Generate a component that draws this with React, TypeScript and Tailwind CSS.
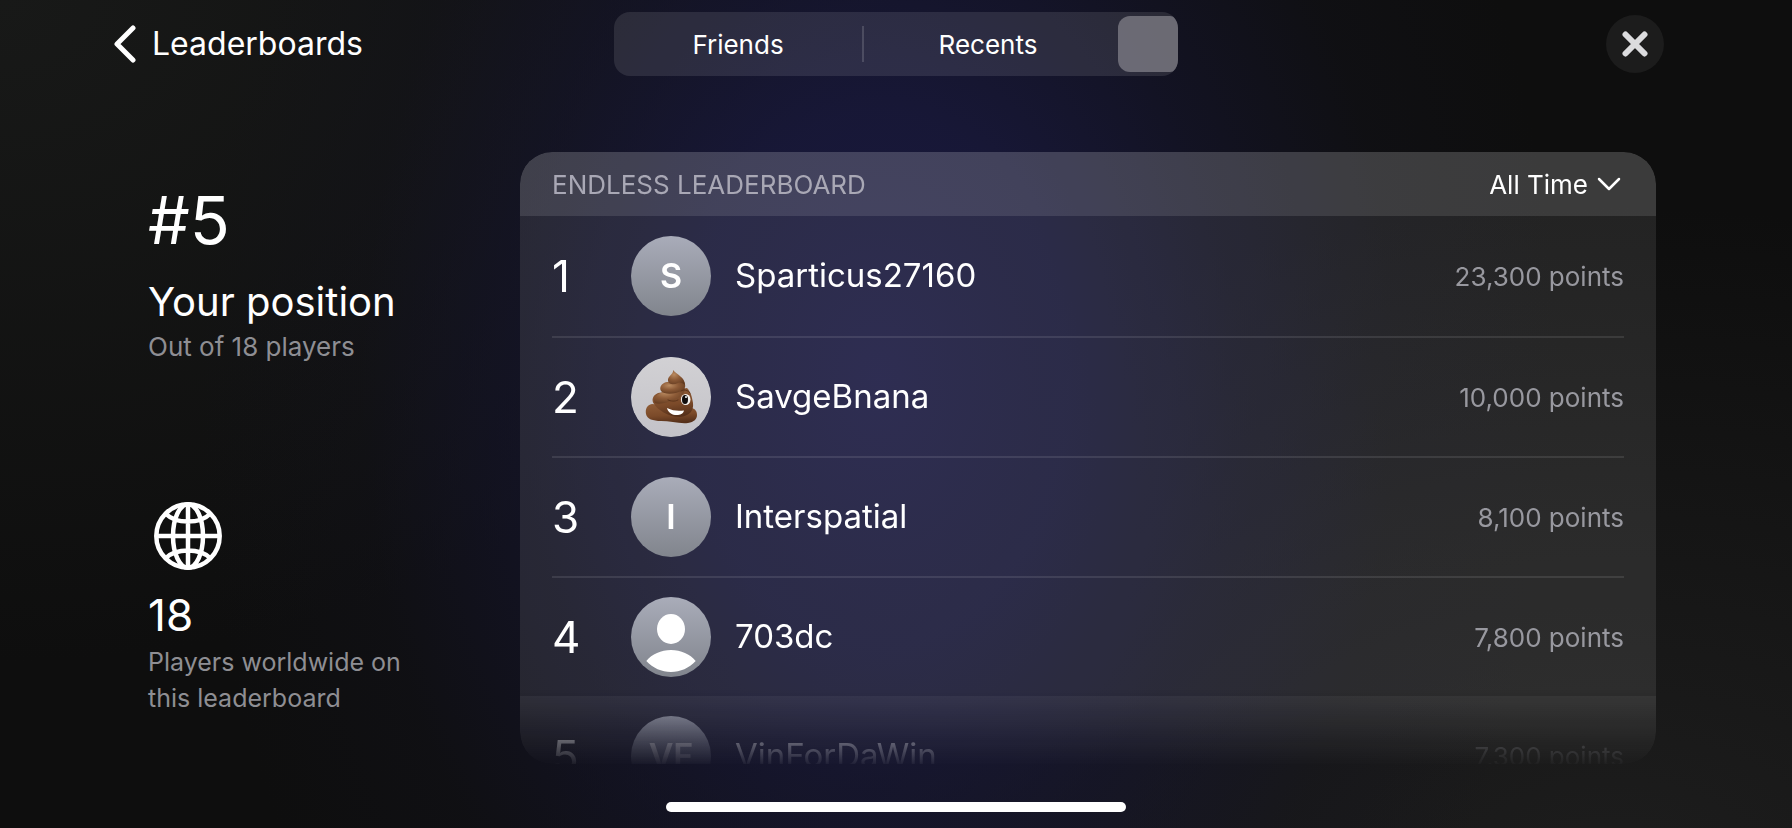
import React from "react";

const glow = {
  background: [
    "radial-gradient(ellipse 680px 960px at 49% 46%, rgba(27,26,68,0.95) 0%, rgba(25,25,62,0.84) 28%, rgba(22,22,50,0.58) 52%, rgba(20,20,34,0.25) 76%, rgba(18,18,30,0) 100%)",
    "radial-gradient(ellipse 60% 80% at 90% 105%, #1d1d1d 0%, rgba(29,29,29,0) 100%)",
    "radial-gradient(ellipse 50% 80% at 0% 0%, #181918 0%, rgba(24,25,24,0) 100%)",
    "#0e0e0e",
  ].join(","),
};

type Player = { rank: number; name: string; points: string; avatar: React.ReactNode; mine?: boolean };

function Initials({ children }: { children: string }) {
  return <span className="text-[34px] leading-none font-semibold text-white">{children}</span>;
}

function PersonAvatar() {
  return (
    <svg viewBox="0 0 80 80" className="size-20" aria-hidden="true">
      <ellipse cx="40" cy="32" rx="14" ry="15" fill="#fff" />
      <path d="M15.300 64C21 57 30 53 40 53s19 4 24.700 11C58 71 49.500 75 40 75s-18-4-24.700-11z" fill="#fff" />
    </svg>
  );
}

function PoopAvatar() {
  return (
    <svg viewBox="0 0 80 80" className="size-20" aria-hidden="true">
      <defs>
        <linearGradient id="plate" x1="0" y1="0" x2="0" y2="1">
          <stop offset="0" stopColor="#d2d1d4" />
          <stop offset="1" stopColor="#c3c2c8" />
        </linearGradient>
        <linearGradient id="base" x1="0.2" y1="0" x2="0.4" y2="1">
          <stop offset="0" stopColor="#8f5c37" />
          <stop offset="0.6" stopColor="#7b4a29" />
          <stop offset="1" stopColor="#56301a" />
        </linearGradient>
        <radialGradient id="swirl" cx="0.36" cy="0.3" r="0.8">
          <stop offset="0" stopColor="#b98a60" />
          <stop offset="0.45" stopColor="#8d5b37" />
          <stop offset="1" stopColor="#5f381e" />
        </radialGradient>
      </defs>
      <circle cx="40" cy="40" r="40" fill="url(#plate)" />
      <path d="M21 47c-5 1-7 5-6 10 1 5 7 7 15 7 9 0 19 3 27 2 6-1 9-4 9-8 0-4-2-6-5-7z" fill="url(#base)" />
      <path d="M27 36c-5 2-7 7-4 11 3 5 14 13 26 13 9-1 14-6 13-14-1-6-2-11-6-15z" fill="url(#base)" />
      <path d="M23 43c1-4 5-8 12-8 8 1 15-1 19-4 0 5-4 9-9 11-7 3-16 6-21 4-1-1-1-2-1-3z" fill="url(#swirl)" />
      <path d="M36 25c-6 1-8 6-6 9 3 4 15 3 20 0 5-2 5-6 3-9z" fill="url(#swirl)" />
      <path d="M42 13c1 4-6 6-5 11 1 4 6 4 10 2 2-1 5 0 7 2 0-8-8-10-12-15z" fill="url(#swirl)" />
      <path d="M37 43c3 1 6 2 10 0M50 34c3-2 7-1 9 2" fill="none" stroke="#5a341c" strokeWidth="1" strokeLinecap="round" />
      <ellipse cx="54.700" cy="42.500" rx="4.800" ry="5.500" fill="#f6f3ef" />
      <ellipse cx="54" cy="42.500" rx="3" ry="4.500" fill="#120e0d" />
      <circle cx="55" cy="40" r="1" fill="#fff" />
      <path d="M36 51c6 3 11 3 17 2.500-1 4-5 5-9 4.500s-7-3-8-7z" fill="#fff" />
    </svg>
  );
}

const players: Player[] = [
  { rank: 1, name: "Sparticus27160", points: "23,300 points", avatar: <Initials>S</Initials> },
  { rank: 2, name: "SavgeBnana", points: "10,000 points", avatar: <PoopAvatar /> },
  { rank: 3, name: "Interspatial", points: "8,100 points", avatar: <Initials>I</Initials> },
  { rank: 4, name: "703dc", points: "7,800 points", avatar: <PersonAvatar /> },
  { rank: 5, name: "VinForDaWin", points: "7,300 points", avatar: <Initials>VF</Initials>, mine: true },
];

function Row({ player }: { player: Player }) {
  return (
    <li className={player.mine ? "bg-white/6 px-8" : "px-8"}>
      <div
        className={
          player.rank === 1 || player.mine
            ? "flex h-[120px] items-center"
            : "flex h-[120px] items-center border-t-2 border-white/10"
        }
      >
        <span className="w-[79px] text-[44px]">{player.rank}</span>
        <span className="flex size-20 shrink-0 items-center justify-center overflow-hidden rounded-full bg-linear-to-b from-[#a9acb9] to-[#81858d]">
          {player.avatar}
        </span>
        <span className="min-w-0 flex-1 truncate pl-6 text-[33px]">{player.name}</span>
        <span className="text-[26px] text-[#98989f]">{player.points}</span>
      </div>
    </li>
  );
}

function Header() {
  return (
    <header className="grid h-[88px] shrink-0 grid-cols-[1fr_564px_1fr] items-center px-28">
      <button type="button" className="flex items-center gap-4 justify-self-start text-[32px]">
        <svg viewBox="0 0 24 40" className="h-10 w-6" fill="none" stroke="#fff" strokeWidth="5" strokeLinecap="round" strokeLinejoin="round" aria-hidden="true">
          <path d="M21 4L5 20l16 16" />
        </svg>
        Leaderboards
      </button>
      <div className="flex h-16 items-center overflow-hidden rounded-2xl bg-white/10 text-[26px]">
        <button type="button" className="h-full w-[248px]">Friends</button>
        <span className="h-9 w-0.5 bg-white/15" />
        <button type="button" className="h-full w-[248px]">Recents</button>
        <button type="button" aria-label="Everyone" className="ml-auto h-14 w-[60px] rounded-l-xl rounded-r-lg bg-[#a09ea6]/55" />
      </div>
      <button type="button" aria-label="Close" className="mr-4 flex size-[58px] items-center justify-center justify-self-end rounded-full bg-[#1c1c1c]">
        <svg viewBox="0 0 26 26" className="size-[26px]" stroke="#dcdcde" strokeWidth="6" strokeLinecap="round" aria-hidden="true">
          <path d="M3.500 3.500l19 19M22.500 3.500l-19 19" />
        </svg>
      </button>
    </header>
  );
}

function Globe() {
  return (
    <svg viewBox="0 0 68 68" className="ml-1.5 size-[68px]" fill="none" stroke="#fff" strokeWidth="4.500" aria-hidden="true">
      <circle cx="34" cy="34" r="31.700" />
      <ellipse cx="34" cy="34" rx="15" ry="31.700" />
      <path d="M34 2v64M2 34h64M12 12c5 5 13 7.500 22 7.500S51 17 56 12M12 56c5-5 13-7.500 22-7.500S51 51 56 56" />
    </svg>
  );
}

export default function App() {
  return (
    <div className="flex h-screen flex-col overflow-hidden font-['Inter',sans-serif] text-white" style={glow}>
      <Header />
      <main className="flex min-h-0 flex-1 pt-16 pr-[136px] pl-[148px]">
        <aside className="flex w-[372px] shrink-0 flex-col justify-between pt-8 pb-12 pr-20">
          <section>
            <p className="text-[66px] leading-[72px]">#5</p>
            <h1 className="pt-5 text-[40px] leading-[52px] whitespace-nowrap">Your position</h1>
            <p className="text-[26px] leading-[38px] text-[#8e8e93]">Out of 18 players</p>
          </section>
          <section>
            <Globe />
            <p className="pt-5 text-[44px] leading-[50px]">18</p>
            <p className="pt-1 text-[25px] leading-9 text-[#8e8e93]">
              Players worldwide on
              <br />
              this leaderboard
            </p>
          </section>
        </aside>
        <section className="flex min-w-0 flex-1 flex-col overflow-hidden rounded-[32px] bg-white/9 mask-[linear-gradient(to_bottom,#000_calc(100%-76px),transparent_calc(100%+4px))]">
          <div className="flex h-16 shrink-0 items-center justify-between bg-white/11 px-8">
            <h2 className="text-[26px] text-[#a9a8b5]">ENDLESS LEADERBOARD</h2>
            <label className="flex items-center gap-2 pr-0.5 text-[26px]">
              <select aria-label="Time range" className="field-sizing-content appearance-none bg-transparent text-white outline-none">
                <option>All Time</option>
              </select>
              <svg viewBox="0 0 26 16" className="h-4 w-[26px]" fill="none" stroke="#fff" strokeWidth="2.500" strokeLinecap="round" strokeLinejoin="round" aria-hidden="true">
                <path d="M3 3l10 10L23 3" />
              </svg>
            </label>
          </div>
          <ol className="min-h-0 flex-1 overflow-y-auto [scrollbar-width:none]">
            {players.map((player) => (
              <Row key={player.rank} player={player} />
            ))}
          </ol>
        </section>
      </main>
      <footer className="flex h-16 shrink-0 items-end justify-center pb-4">
        <div className="h-2.5 w-[460px] rounded-full bg-white" />
      </footer>
    </div>
  );
}
